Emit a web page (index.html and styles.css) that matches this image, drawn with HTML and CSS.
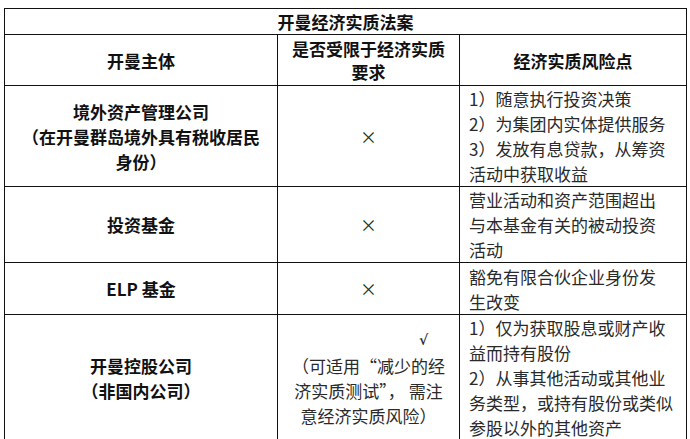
FILE: index.html
```html
<!DOCTYPE html>
<html lang="zh-CN">
<head>
<meta charset="utf-8">
<title>开曼经济实质法案</title>
<link rel="stylesheet" href="styles.css">
</head>
<body>
<table class="law">
  <colgroup>
    <col class="c1">
    <col class="c2">
    <col class="c3">
  </colgroup>
  <tr class="r-title">
    <td colspan="3" class="title">开曼经济实质法案</td>
  </tr>
  <tr class="r-head">
    <th>开曼主体</th>
    <th class="head2">是否受限于经济实质<br>要求</th>
    <th>经济实质风险点</th>
  </tr>
  <tr class="r1">
    <td class="entity">境外资产管理公司<br>（在开曼群岛境外具有税收居民<br>身份）</td>
    <td class="mark">×</td>
    <td class="risk">1）随意执行投资决策<br>2）为集团内实体提供服务<br>3）发放有息贷款，从筹资<br>活动中获取收益</td>
  </tr>
  <tr class="r2">
    <td class="entity">投资基金</td>
    <td class="mark">×</td>
    <td class="risk">营业活动和资产范围超出<br>与本基金有关的被动投资<br>活动</td>
  </tr>
  <tr class="r3">
    <td class="entity">ELP 基金</td>
    <td class="mark">×</td>
    <td class="risk">豁免有限合伙企业身份发<br>生改变</td>
  </tr>
  <tr class="r4">
    <td class="entity">开曼控股公司<br>（非国内公司）</td>
    <td class="mark note"><span class="check">√</span>（可适用“减少的经<br>济实质测试”，&nbsp;需注<br>意经济实质风险）</td>
    <td class="risk">1）仅为获取股息或财产收<br>益而持有股份<br>2）从事其他活动或其他业<br>务类型，或持有股份或类似<br>参股以外的其他资产</td>
  </tr>
</table>
</body>
</html>
```

FILE: styles.css
```css
html, body {
  background: #ffffff;
}
body {
  margin: 8px 0 0 4px;
  font-family: "Noto Sans CJK SC", "Liberation Serif", serif;
  font-size: 17px;
  color: #222222;
}
.law {
  border-collapse: collapse;
  width: 682px;
  table-layout: fixed;
}
.c1 { width: 273px; }
.c2 { width: 182px; }
.c3 { width: 227px; }
.law td,
.law th {
  border: 1px solid #111111;
  padding: 0 9px;
  line-height: 25px;
  vertical-align: middle;
  text-align: center;
  font-weight: 400;
}
.law th,
.law .title,
.law .entity {
  font-weight: 700;
  color: #111111;
}
.law .head2 {
  line-height: 23px;
}
.r-title { height: 25px; }
.r-head { height: 51px; }
.r1 { height: 101px; }
.r2 { height: 75px; }
.r3 { height: 52px; }
.r4 { height: 124px; }
.law .risk {
  text-align: left;
  padding-left: 9px;
  color: #2a2a2a;
}
.law .mark {
  color: #2a2a2a;
}
.law .note {
  padding: 0 4px;
}
.check {
  display: block;
  padding-left: 110px;
  font-family: "DejaVu Serif", "Liberation Serif", serif;
  font-size: 14px;
  font-weight: 700;
}
```
